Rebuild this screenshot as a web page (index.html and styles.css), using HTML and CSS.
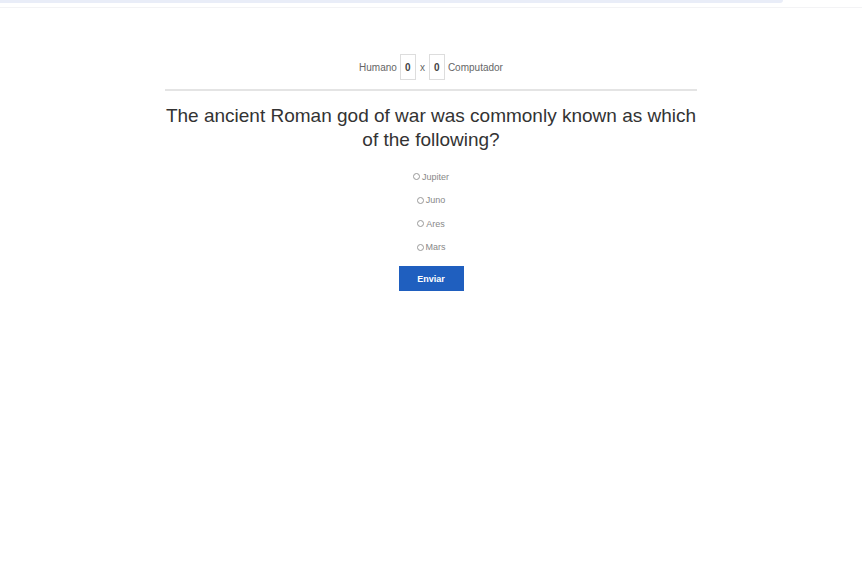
FILE: index.html
```html
<!DOCTYPE html>
<html>
<head>
<meta charset="utf-8">
<link rel="stylesheet" href="styles.css">
</head>
<body>
<div class="chrome">
  <div class="chrome-tab"></div>
  <div class="chrome-line"></div>
</div>
<main class="quiz">
  <div class="score">
    <span class="label">Humano</span>
    <span class="box">0</span>
    <span class="x">x</span>
    <span class="box">0</span>
    <span class="label">Computador</span>
  </div>
  <hr class="rule">
  <h1 class="question">The ancient Roman god of war was commonly known as which of the following?</h1>
  <form class="options">
    <label class="option"><input type="radio" name="a"><span>Jupiter</span></label>
    <label class="option"><input type="radio" name="a"><span>Juno</span></label>
    <label class="option"><input type="radio" name="a"><span>Ares</span></label>
    <label class="option"><input type="radio" name="a"><span>Mars</span></label>
    <button type="button" class="submit">Enviar</button>
  </form>
</main>
</body>
</html>
```
FILE: styles.css
```css
html, body {
  margin: 0;
  padding: 0;
  background: #ffffff;
  font-family: "Liberation Sans", Arial, sans-serif;
}
body {
  padding-right: 5px;
}
.chrome {
  height: 9px;
  position: relative;
}
.chrome-tab {
  width: 783px;
  height: 3px;
  background: #e9edf8;
  border-bottom-right-radius: 3px;
}
.chrome-line {
  margin-top: 4px;
  height: 1px;
  background: #f3f3f5;
}
.quiz {
  width: 532px;
  margin: 0 auto;
}
.score {
  display: flex;
  justify-content: center;
  align-items: center;
  gap: 3px;
  margin-top: 45px;
  font-size: 10px;
  color: #666;
}
.box {
  display: inline-flex;
  align-items: center;
  justify-content: center;
  width: 14px;
  height: 24px;
  border: 1px solid #ddd;
  font-weight: bold;
  color: #444;
}
.x {
  margin: 0 1px;
}
.rule {
  border: 0;
  height: 2px;
  background: #e4e4e4;
  margin: 9px 0 0;
}
.question {
  margin: 13px 0 0;
  font-size: 19px;
  font-weight: normal;
  line-height: 24px;
  color: #333;
  text-align: center;
}
.options {
  display: flex;
  flex-direction: column;
  align-items: center;
  margin-top: 13px;
}
.option {
  display: flex;
  align-items: center;
  height: 23.5px;
  font-size: 9px;
  color: #888;
}
.option input {
  appearance: none;
  width: 7px;
  height: 7px;
  margin: 0 2px 0 0;
  border: 1px solid #999;
  border-radius: 50%;
}
.submit {
  margin-top: 7px;
  width: 65px;
  height: 25px;
  border: 0;
  background: #1f5fbf;
  color: #fff;
  font-family: "Liberation Sans", Arial, sans-serif;
  font-weight: bold;
  font-size: 9px;
}
```
